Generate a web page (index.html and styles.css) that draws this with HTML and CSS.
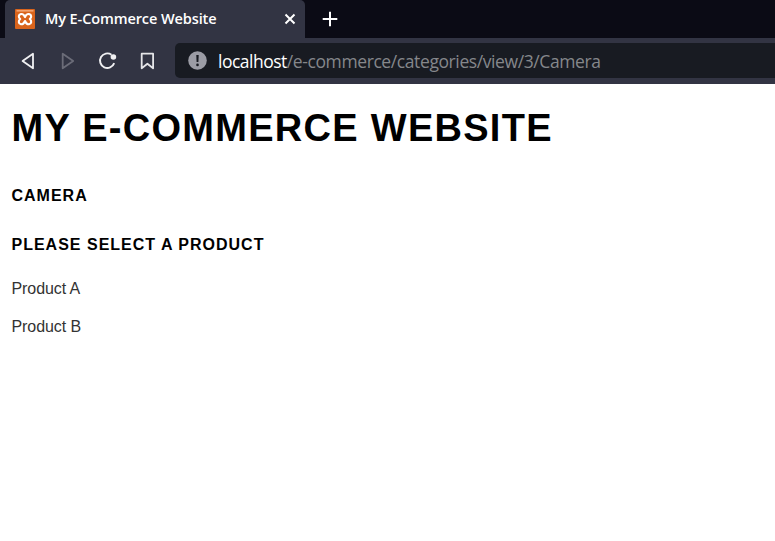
FILE: index.html
```
<!DOCTYPE html>
<html lang="en">
<head>
<meta charset="utf-8">
<title>My E-Commerce Website</title>
<link rel="stylesheet" href="styles.css">
</head>
<body>
<header class="browser">
  <div class="tabs">
    <div class="tab">
      <svg class="favicon" width="20" height="20" viewBox="0 0 20 20">
        <rect width="20" height="20" rx="1" fill="#d9641c"/>
        <path d="M1.500 1h17v1.600h-17z" fill="#f3a36f"/>
        <path d="M10 8.100C9 5.500 7.500 4.900 5.900 5.100C3.300 5.500 3.200 8.300 5.200 10C3.200 11.700 3.300 14.900 5.900 15.300C7.700 15.500 9 14.500 10 12C11 14.500 12.300 15.500 14.100 15.300C16.700 14.900 16.800 11.700 14.800 10C16.800 8.300 16.700 5.500 14.100 5.100C12.500 4.900 11 5.500 10 8.100Z" fill="none" stroke="#fff" stroke-width="2.100" stroke-linejoin="round"/>
      </svg>
      <span class="tab-title">My E-Commerce Website</span>
      <svg class="close" width="12" height="12" viewBox="0 0 12 12"><path d="m1.500 1.500 9 9m0-9-9 9" stroke="#fff" stroke-width="2"/></svg>
    </div>
    <svg class="plus" width="16" height="16" viewBox="0 0 16 16"><path d="M8 .7v14.600M.7 8h14.600" stroke="#fff" stroke-width="2"/></svg>
  </div>
  <nav class="toolbar">
    <svg width="40" height="30" viewBox="0 0 40 30"><path d="M33 7.700v14.600L22.600 15Z" fill="none" stroke="#f0f0f2" stroke-width="1.800" stroke-linejoin="round"/></svg>
    <svg width="40" height="30" viewBox="0 0 40 30"><path d="M22.700 7.700v14.600L33.200 15Z" fill="none" stroke="#6b6c78" stroke-width="1.800" stroke-linejoin="round"/></svg>
    <svg width="40" height="30" viewBox="0 0 40 30"><path d="M31.500 8.700A7.300 7.300 0 1 0 34.200 17.200" fill="none" stroke="#f0f0f2" stroke-width="1.900"/><circle cx="33.400" cy="11" r="2.800" fill="#f0f0f2"/></svg>
    <svg width="40" height="30" viewBox="0 0 40 30"><path d="M21.700 7.700h11.400v14.600l-5.700-4.500-5.700 4.500Z" fill="none" stroke="#e5e5e8" stroke-width="1.800" stroke-linejoin="round"/></svg>
    <div class="address">
      <svg width="19" height="19" viewBox="0 0 19 19"><circle cx="9.500" cy="9.500" r="9.300" fill="#9b9ca5"/><path d="M8.300 4h2.400l-.3 7H8.600Z" fill="#171a21"/><circle cx="9.500" cy="13.900" r="1.300" fill="#171a21"/></svg>
      <span class="url"><span class="host">localhost</span><span class="path">/e-commerce/categories/view/3/Camera</span></span>
    </div>
  </nav>
</header>
<main>
  <h1>MY E-COMMERCE WEBSITE</h1>
  <h2>CAMERA</h2>
  <h2 class="prompt">PLEASE SELECT A PRODUCT</h2>
  <p>Product A</p>
  <p>Product B</p>
</main>
</body>
</html>
```
FILE: styles.css
```
body { margin: 0; background: #fff; font-family: "Liberation Sans", Arial, sans-serif; }
.browser { height: 84px; background: #323443; font-family: "Open Sans", "Noto Sans", sans-serif; overflow: hidden; }
.tabs { display: flex; height: 38px; padding-left: 5px; background: #0b0b15; }
.tab { display: flex; align-items: center; box-sizing: border-box; width: 300px; padding: 0 9px 0 10px; background: #323443; border-radius: 5px 5px 0 0; }
.tab-title { flex: 1; margin: -2px 0 0 10px; color: #fff; font-size: 14.500px; font-weight: 600; letter-spacing: -0.100px; white-space: nowrap; }
.plus { margin: 11px 0 0 17px; }
.toolbar { display: flex; align-items: center; height: 45px; }
.toolbar svg { flex: none; }
.address { display: flex; align-items: center; flex: 1; height: 35px; margin-left: 15px; padding-left: 13px; background: #181b22; border-radius: 5px 0 0 5px; }
.url { margin-left: 11px; font-size: 17.500px; white-space: nowrap; }
.host { color: #fff; letter-spacing: -0.500px; }
.path { color: #85878b; letter-spacing: -0.400px; }
main { padding: 20px 11.500px 0; }
h1 { margin: 0; font-size: 38px; line-height: 48px; letter-spacing: 1.280px; white-space: nowrap; }
h2 { margin: 34px 0 0; font-size: 16px; line-height: 20px; letter-spacing: 1px; }
.prompt { margin-top: 29px; }
p { margin: 24px 0 0; color: #333; font-size: 16px; line-height: 20px; letter-spacing: -0.080px; }
p + p { margin-top: 18px; }
```
